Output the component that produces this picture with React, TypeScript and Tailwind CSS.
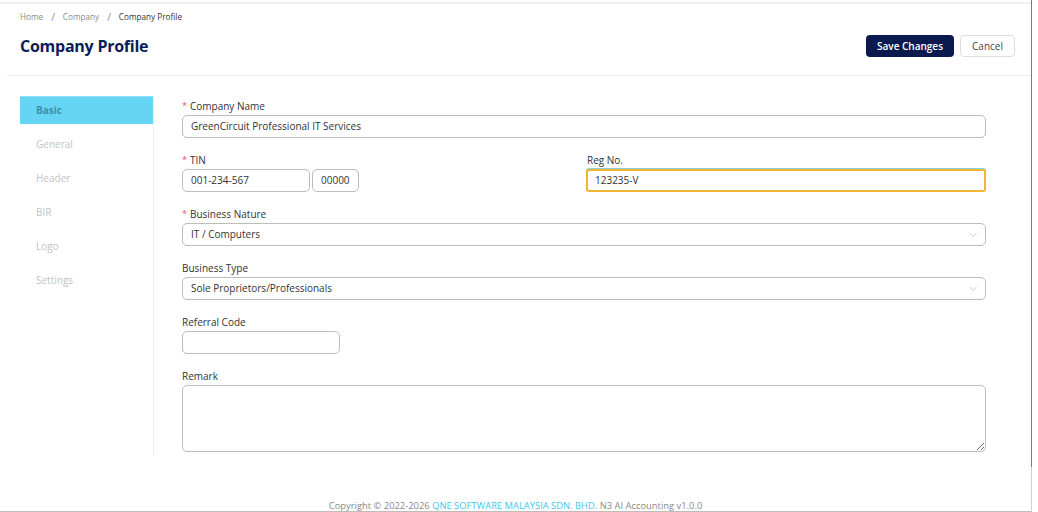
import React from "react";

function Chevron() {
  return (
    <svg width="8" height="5" viewBox="0 0 8 5" className="absolute right-[8px] top-1/2 -translate-y-1/2">
      <path d="M0.5 0.5 L4 4 L7.5 0.5" fill="none" stroke="#c2c2c2" strokeWidth="0.9" />
    </svg>
  );
}

function Label({ children, required }: { children: React.ReactNode; required?: boolean }) {
  return (
    <div className="h-[12px] leading-[12px] text-[10px] text-[#333] flex items-center">
      {required && <span className="text-[#f0506e] text-[9px] mr-[3px] leading-[12px]">*</span>}
      {children}
    </div>
  );
}

const inputCls =
  "h-[23px] border border-[#bdbdbd] rounded-[5px] px-[8px] text-[10px] text-[#333] flex items-center bg-white";

export default function App() {
  const side = ["General", "Header", "BIR", "Logo", "Settings"];
  return (
    <div className="w-[1038px] h-[512px] bg-white overflow-hidden font-['Open_Sans',sans-serif] text-[#333]">
      <div className="w-[1032px] h-[512px] flex flex-col">
        <div className="h-[467px] border-r border-[#7d7d7d] flex flex-col">
          <div className="h-[2px]" />
          <div className="h-[2px] bg-[#efefef]" />
          {/* header */}
          <div className="ml-[7px] h-[72px] border-b border-[#efefef] pl-[13px] pr-[16px] flex flex-col">
            <div className="pt-[8px] h-[18px] flex items-center gap-[8px] text-[8.2px] leading-[10px]">
              <span className="text-[#8a8a8a]">Home</span>
              <span className="text-[#8a8a8a] text-[10px]">/</span>
              <span className="text-[#8a8a8a]">Company</span>
              <span className="text-[#8a8a8a] text-[10px]">/</span>
              <span className="text-[#333]">Company Profile</span>
            </div>
            <div className="flex items-center justify-between mt-[12px]">
              <div className="text-[16px] font-bold text-[#0b1d57] leading-[24px] tracking-[-0.25px]">
                Company Profile
              </div>
              <div className="flex items-center gap-[6px]">
                <button className="h-[22px] w-[88px] rounded-[4px] bg-[#0a1a4f] text-white text-[10px] font-semibold">
                  Save Changes
                </button>
                <button className="h-[22px] w-[55px] rounded-[4px] bg-white border border-[#dedede] text-[#444] text-[10px]">
                  Cancel
                </button>
              </div>
            </div>
          </div>
          {/* content */}
          <div className="flex pt-[20px]">
            <div className="ml-[20px] w-[134px] h-[359px] border-r border-[#eeeeee] flex flex-col gap-[6px]">
              <div className="h-[28px] bg-[#66d4f3] border-t border-[#8fe0f7] pl-[16px] flex items-center text-[10px] font-bold text-[#3c90aa]">
                Basic
              </div>
              {side.map((s) => (
                <div key={s} className="h-[28px] pl-[16px] flex items-center text-[10px] text-[#c3c3c3]">
                  {s}
                </div>
              ))}
            </div>
            <div className="ml-[28px] w-[804px] pt-[4px] flex flex-col gap-[16px]">
              <div className="flex flex-col gap-[3px]">
                <Label required>Company Name</Label>
                <div className={inputCls}>GreenCircuit Professional IT Services</div>
              </div>
              <div className="grid grid-cols-2 gap-x-[4px]">
                <div className="flex flex-col gap-[3px]">
                  <Label required>TIN</Label>
                  <div className="flex gap-[2px]">
                    <div className={inputCls + " w-[128px]"}>001-234-567</div>
                    <div className={inputCls + " w-[47px]"}>00000</div>
                  </div>
                </div>
                <div className="flex flex-col gap-[3px]">
                  <div className="pl-[1px]">
                    <Label>Reg No.</Label>
                  </div>
                  <div className="h-[23px] border-2 border-[#f4b534] rounded-[3px] px-[7px] text-[10px] text-[#333] flex items-center bg-white shadow-[0_-1px_0_#86d3e4]">
                    123235-V
                  </div>
                </div>
              </div>
              <div className="flex flex-col gap-[3px]">
                <Label required>Business Nature</Label>
                <div className={inputCls + " relative"}>
                  IT / Computers
                  <Chevron />
                </div>
              </div>
              <div className="flex flex-col gap-[3px]">
                <Label>Business Type</Label>
                <div className={inputCls + " relative"}>
                  Sole Proprietors/Professionals
                  <Chevron />
                </div>
              </div>
              <div className="flex flex-col gap-[3px]">
                <Label>Referral Code</Label>
                <div className={inputCls + " w-[158px]"} />
              </div>
              <div className="flex flex-col gap-[3px]">
                <Label>Remark</Label>
                <textarea
                  className="h-[67px] border border-[#bdbdbd] rounded-[5px] bg-white outline-none"
                  defaultValue=""
                />
              </div>
            </div>
          </div>
        </div>
        <div className="h-[45px] border-r border-[#d0d0d0] border-b border-b-[#bdbdbd] relative">
          <div className="absolute left-0 right-0 top-[33px] text-center text-[9.4px] leading-[12px] text-[#8a8a8a] whitespace-nowrap">
            Copyright © 2022-2026 <span className="text-[#45c6ea]">QNE SOFTWARE MALAYSIA SDN. BHD.</span> N3 AI Accounting v1.0.0
          </div>
        </div>
      </div>
    </div>
  );
}
